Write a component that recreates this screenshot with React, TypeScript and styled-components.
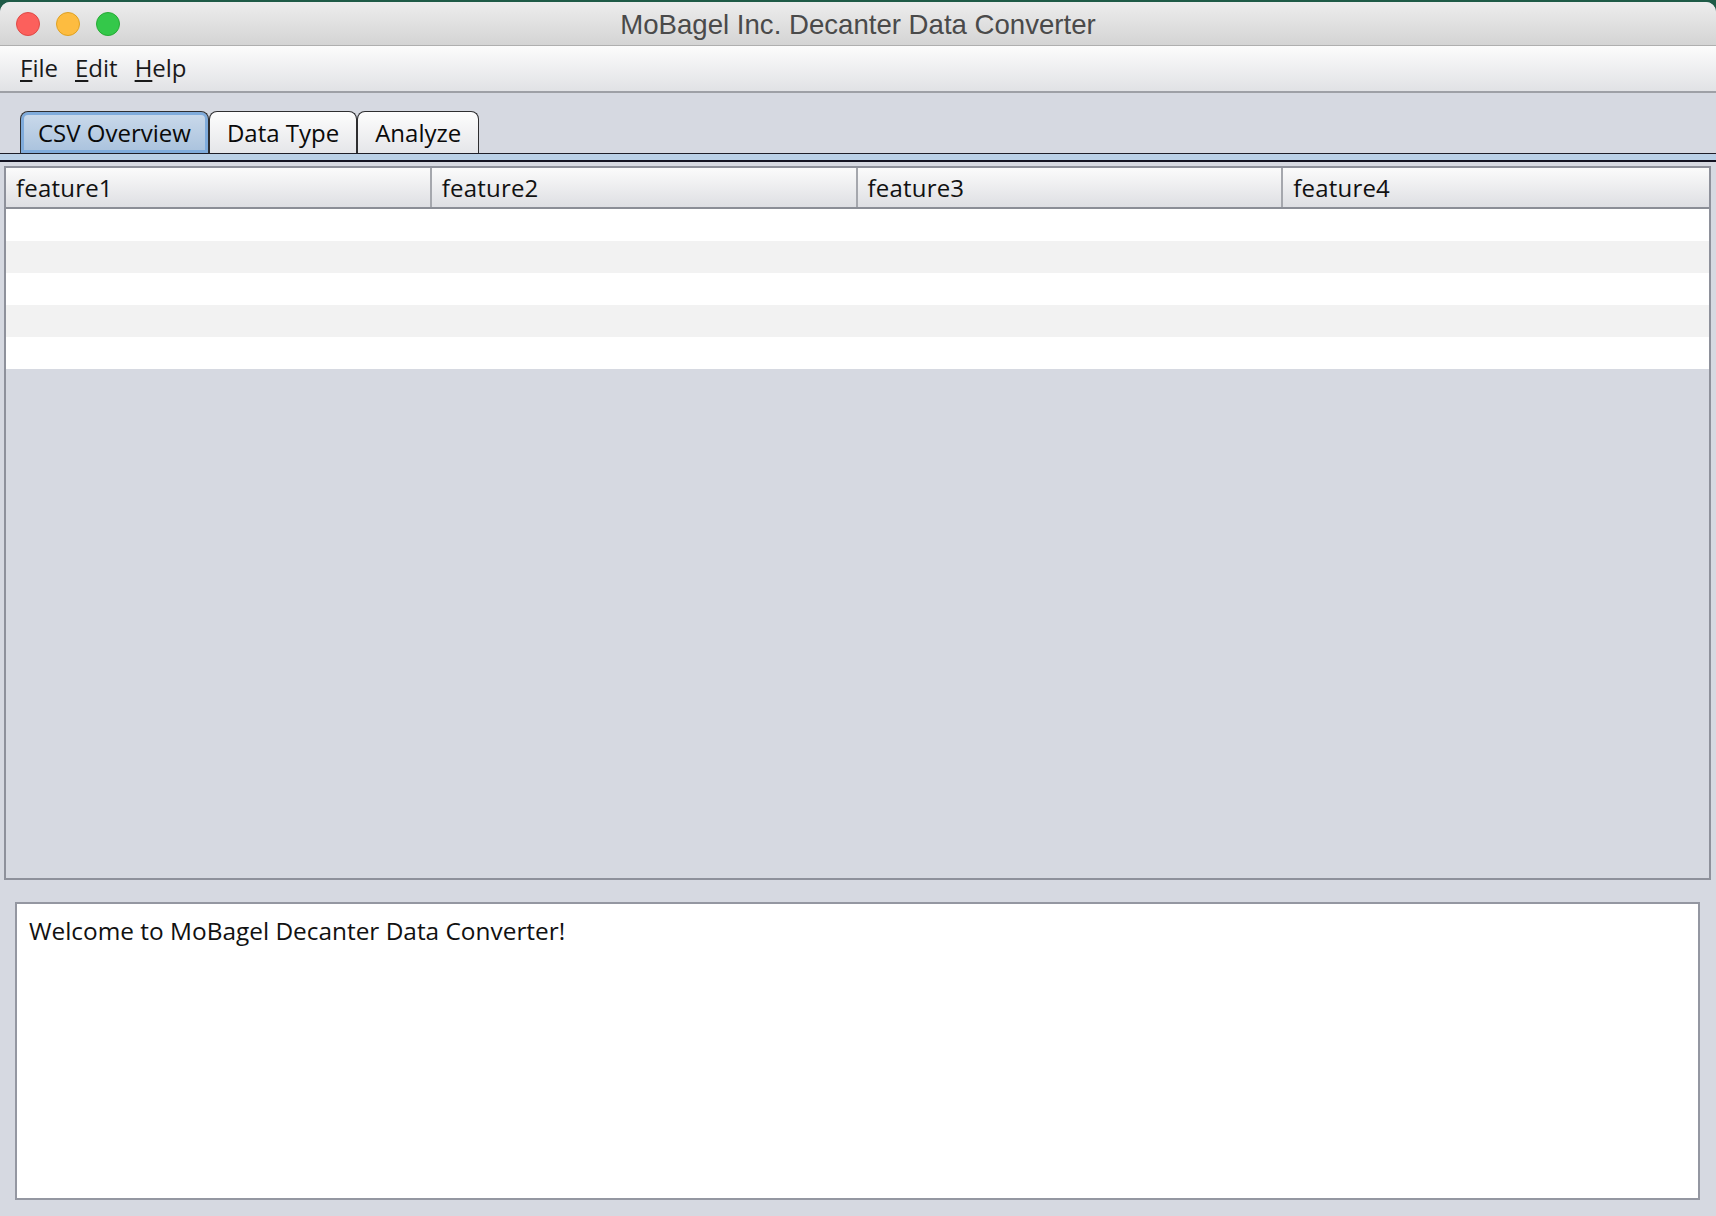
import React from "react";
import styled, { createGlobalStyle } from "styled-components";

const GlobalStyle = createGlobalStyle`
  html, body { margin: 0; padding: 0; background: #1f5b47; }
  body { font-family: "Open Sans", "DejaVu Sans", sans-serif; color: #111; }
  * { box-sizing: border-box; }
`;

const Window = styled.div`
  margin-top: 2px;
  height: 1214px;
  display: flex;
  flex-direction: column;
  border-radius: 10px 10px 0 0;
  overflow: hidden;
  background: #d6d9e1;
`;

const TitleBar = styled.div`
  height: 44px;
  flex: none;
  display: grid;
  grid-template-columns: 1fr auto 1fr;
  align-items: center;
  background: linear-gradient(#ededed, #d4d4d4);
  border-bottom: 1px solid #afafaf;
`;

const Lights = styled.div`
  display: flex;
  gap: 16px;
  padding-left: 16px;
`;

const Light = styled.span<{ $fill: string; $edge: string }>`
  width: 24px;
  height: 24px;
  border-radius: 50%;
  background: ${(p) => p.$fill};
  border: 1px solid ${(p) => p.$edge};
`;

const Title = styled.div`
  font-family: "Liberation Sans", Arial, sans-serif;
  font-size: 27.6px;
  color: #4a4a4a;
  padding-top: 2px;
`;

const MenuBar = styled.div`
  height: 47px;
  flex: none;
  display: flex;
  align-items: center;
  padding-left: 20px;
  padding-bottom: 3px;
  gap: 17px;
  background: linear-gradient(#fcfcfc, #e1e2e5);
  border-bottom: 2px solid #9ea0a6;
`;

const MenuItem = styled.span`
  font-size: 24px;
  color: #1a1a1a;
  & u { text-decoration-thickness: 2px; text-underline-offset: 3px; }
`;

const Body = styled.div`
  flex: 1;
  display: flex;
  flex-direction: column;
  padding-top: 18px;
  min-height: 0;
`;

const TabRow = styled.div`
  display: flex;
  align-items: flex-end;
  padding-left: 20px;
  height: 42px;
`;

const Tab = styled.div<{ $active?: boolean }>`
  height: 42px;
  padding: 0 17px;
  display: flex;
  align-items: center;
  font-size: 24px;
  color: #0a0a0a;
  border: 1.5px solid #2e2e30;
  border-bottom: none;
  border-radius: 8px 8px 0 0;
  background: ${(p) =>
    p.$active
      ? "linear-gradient(#cbdaeb, #a9c2dd)"
      : "linear-gradient(#fdfdfd, #e5e6e9)"};
  box-shadow: ${(p) => (p.$active ? "inset 0 0 0 3px #7fabdb" : "none")};
`;

const TabStrip = styled.div`
  height: 9px;
  border-top: 1px solid #1e1e28;
  border-bottom: 2px solid #121220;
  background: #bad0e6;
`;

const TableBox = styled.div`
  flex: 1;
  margin: 4px 5px 0 4px;
  border: 2px solid #8e919b;
  display: flex;
  flex-direction: column;
  background: #d6d9e1;
`;

const Header = styled.div`
  height: 41px;
  display: grid;
  grid-template-columns: repeat(4, 1fr);
  background: linear-gradient(#fbfbfb, #dedfe3);
  border-bottom: 2px solid #8b8e96;
`;

const HeaderCell = styled.div<{ $last?: boolean }>`
  display: flex;
  align-items: center;
  padding-left: 10px;
  font-size: 24px;
  letter-spacing: 0.2px;
  color: #111;
  border-right: ${(p) => (p.$last ? "none" : "2px solid #a5a7ad")};
`;

const Row = styled.div<{ $odd?: boolean }>`
  height: 32px;
  background: ${(p) => (p.$odd ? "#f2f2f2" : "#ffffff")};
`;

const Console = styled.div`
  height: 298px;
  flex: none;
  margin: 22px 16px 16px 15px;
  border: 2px solid #9497a1;
  background: #fff;
  padding: 10px 12px;
  font-size: 24.4px;
  color: #111;
`;

const columns = ["feature1", "feature2", "feature3", "feature4"];

export default function App() {
  return (
    <>
      <GlobalStyle />
      <Window>
        <TitleBar>
          <Lights>
            <Light $fill="#fc605c" $edge="#de4a46" />
            <Light $fill="#fdbc40" $edge="#dea123" />
            <Light $fill="#34c84a" $edge="#27aa35" />
          </Lights>
          <Title>MoBagel Inc. Decanter Data Converter</Title>
          <div />
        </TitleBar>
        <MenuBar>
          <MenuItem><u>F</u>ile</MenuItem>
          <MenuItem><u>E</u>dit</MenuItem>
          <MenuItem><u>H</u>elp</MenuItem>
        </MenuBar>
        <Body>
          <TabRow>
            <Tab $active>CSV Overview</Tab>
            <Tab>Data Type</Tab>
            <Tab>Analyze</Tab>
          </TabRow>
          <TabStrip />
          <TableBox>
            <Header>
              {columns.map((c, i) => (
                <HeaderCell key={c} $last={i === columns.length - 1}>{c}</HeaderCell>
              ))}
            </Header>
            {[0, 1, 2, 3, 4].map((i) => (
              <Row key={i} $odd={i % 2 === 1} />
            ))}
          </TableBox>
          <Console>Welcome to MoBagel Decanter Data Converter!</Console>
        </Body>
      </Window>
    </>
  );
}
